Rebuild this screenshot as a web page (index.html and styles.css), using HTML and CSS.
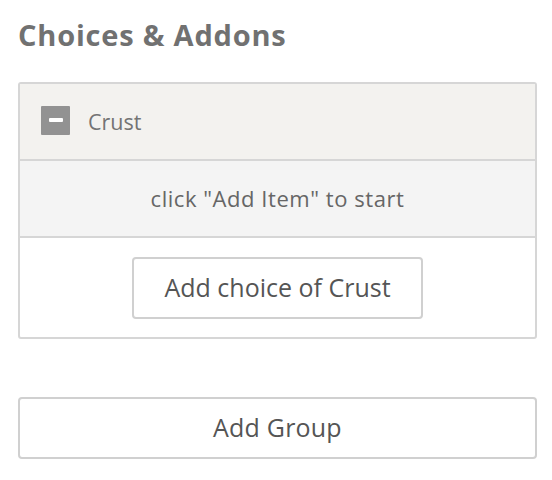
FILE: index.html
```html
<!DOCTYPE html>
<html>
<head>
<meta charset="utf-8">
<link rel="stylesheet" href="styles.css">
</head>
<body>
<div class="page">
  <h2 class="title">Choices &amp; Addons</h2>
  <div class="panel">
    <div class="group-head">
      <span class="toggle"><span class="bar"></span></span>
      <span class="group-name">Crust</span>
    </div>
    <div class="empty">click "Add Item" to start</div>
    <div class="actions">
      <button class="btn">Add choice of Crust</button>
    </div>
  </div>
  <button class="btn btn-block">Add Group</button>
</div>
</body>
</html>
```
FILE: styles.css
```css
* { box-sizing: border-box; }
html, body { margin: 0; padding: 0; background: #fff; }
body { font-family: "Open Sans", "Liberation Sans", sans-serif; color: #666; }
.page { padding: 16px 15px 0 18px; width: 552px; }
.title { margin: 0 0 28px; font-size: 29px; font-weight: 700; color: #717171; line-height: 38px; letter-spacing: 0.8px; }
.panel { border: 2px solid #d6d6d6; border-radius: 3px; margin-bottom: 58px; }
.group-head { display: flex; align-items: center; height: 77px; background: #f3f2ef; padding-left: 21px; padding-bottom: 3px; border-bottom: 2px solid #d6d6d6; }
.toggle { width: 29px; height: 29px; background: #929292; display: flex; align-items: center; justify-content: center; margin-right: 18px; border-radius: 1px; }
.bar { width: 14px; height: 4px; background: #fff; border-radius: 1px; }
.group-name { font-size: 21.5px; color: #747474; margin-top: 3px; }
.empty { height: 77px; background: #f4f4f4; display: flex; align-items: center; justify-content: center; font-size: 22px; letter-spacing: 0.55px; color: #666; border-bottom: 2px solid #d6d6d6; padding-bottom: 1px; }
.actions { display: flex; justify-content: center; padding: 19px 0 18px; }
.btn { font-family: "Open Sans", "Liberation Sans", sans-serif; font-size: 25px; color: #555; background: #fff; border: 2px solid #d0d0d0; border-radius: 4px; height: 62px; padding: 0 30px 2px; }
.btn-block { width: 100%; display: block; letter-spacing: 0.2px; }
```
